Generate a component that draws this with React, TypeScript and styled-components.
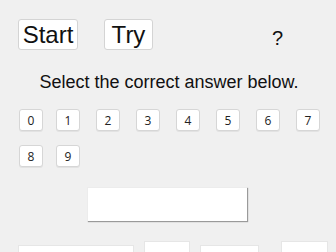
import React from "react";
import styled, { createGlobalStyle } from "styled-components";

const GlobalStyle = createGlobalStyle`
  html, body {
    margin: 0;
    padding: 0;
    overflow: hidden;
    background: #f0f0f0;
  }
`

const Page = styled.div`
  width: 336px;
  height: 252px;
  overflow: hidden;
  font-family: "Liberation Sans", Arial, sans-serif;
  color: #111;
`

const TopBar = styled.div`
  display: flex;
  align-items: center;
  height: 31px;
  padding: 19px 0 0 18px;
`

const BigButton = styled.button<{ $w: number }>`
  box-sizing: border-box;
  width: ${p => p.$w}px;
  height: 31px;
  padding: 0;
  background: #fff;
  border: 1px solid #d4d4d4;
  border-radius: 3px;
  font-family: "Liberation Sans", Arial, sans-serif;
  font-size: 24px;
  line-height: 29px;
  color: #111;
  & + & {
    margin-left: 26px;
  }
`

const Help = styled.span`
  margin-left: 119px;
  margin-top: 7px;
  font-size: 20px;
  width: 8px;
  text-align: center;
`

const Title = styled.div`
  margin-top: 22px;
  text-align: center;
  font-size: 18px;
  line-height: 21px;
  padding-left: 2px;
`

const Digits = styled.div`
  display: grid;
  grid-template-columns: 37px repeat(7, 40px);
  row-gap: 14px;
  margin-top: 16px;
  padding-left: 19px;
`

const DigitButton = styled.button`
  box-sizing: border-box;
  width: 24px;
  height: 22px;
  padding: 0;
  background: #fff;
  border: 1px solid #d6d6d6;
  border-radius: 3px;
  box-shadow: 0 1px 0 #e2e2e2;
  font-family: "Open Sans", "Noto Sans", sans-serif;
  font-size: 12px;
  color: #222;
`

const AnswerBox = styled.div`
  box-sizing: border-box;
  width: 160px;
  height: 34px;
  margin: 20px 0 0 87px;
  background: #fff;
  border-top: 1px solid #ececec;
  border-left: 1px solid #ececec;
  box-shadow: 1px 1px 1px #9a9a9a;
`

const BottomRow = styled.div`
  display: flex;
  align-items: flex-start;
  margin-top: 20px;
  padding-left: 18px;
`

const Tile = styled.div<{ $w: number; $top: number; $gap: number }>`
  box-sizing: border-box;
  width: ${p => p.$w}px;
  height: 40px;
  margin-top: ${p => p.$top}px;
  margin-left: ${p => p.$gap}px;
  background: #fff;
  border: 1px solid #e6e6e6;
`

const digits = ["0", "1", "2", "3", "4", "5", "6", "7", "8", "9"];

const App = (): JSX.Element => {
    return (
        <Page>
            <GlobalStyle />
            <TopBar>
                <BigButton $w={60}>Start</BigButton>
                <BigButton $w={49}>Try</BigButton>
                <Help>?</Help>
            </TopBar>
            <Title>Select the correct answer below.</Title>
            <Digits>
                {digits.map(d => (
                    <DigitButton key={d}>{d}</DigitButton>
                ))}
            </Digits>
            <AnswerBox />
            <BottomRow>
                <Tile $w={116} $top={4} $gap={0} />
                <Tile $w={46} $top={0} $gap={10} />
                <Tile $w={59} $top={4} $gap={10} />
                <Tile $w={47} $top={0} $gap={22} />
            </BottomRow>
        </Page>
    )
}

export default App;
